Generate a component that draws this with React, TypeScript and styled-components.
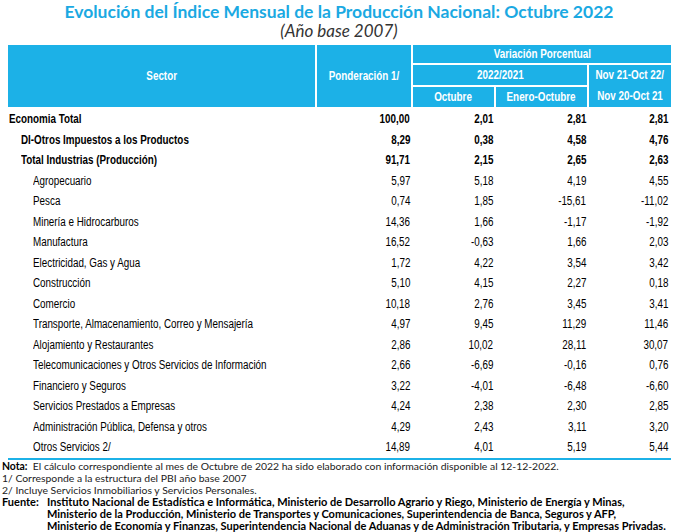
import React from "react";
import styled, { createGlobalStyle } from "styled-components";

const GlobalStyle = createGlobalStyle`
  html, body {
    margin: 0;
    padding: 0;
    background: #fff;
  }
`;

const Page = styled.div`
  width: 678px;
  height: 532px;
  overflow: hidden;
  background: #fff;
`;

const Heading = styled.div`
  padding-top: 2px;
  margin-bottom: 5px;
  text-align: center;
  font-family: Lato, "Open Sans", sans-serif;
`;

const Title = styled.h1`
  margin: 0;
  font-weight: 700;
  font-size: 17.5px;
  line-height: 20px;
  color: #1aa9e2;
`;

const Subtitle = styled.div`
  font-style: italic;
  font-size: 17px;
  line-height: 18px;
  color: #333;
`;

const Table = styled.div`
  margin: 0 7px 0 8px;
  font-family: "Liberation Sans", Arial, sans-serif;
  font-size: 12px;
`;

const cols = "307px 94px 81px 91px 82px";

const Head = styled.div`
  display: grid;
  grid-template-columns: ${cols};
  grid-template-rows: 18px 20px 20px;
  gap: 2px;
`;

const HeadCell = styled.div<{ $col: string; $row: string }>`
  grid-column: ${(p) => p.$col};
  grid-row: ${(p) => p.$row};
  background: #1cb1e7;
  color: #fff;
  font-weight: 700;
  display: flex;
  flex-direction: column;
  align-items: center;
  justify-content: center;
  line-height: 21px;
  white-space: nowrap;
`;

// Arial Narrow look: Liberation Sans squeezed horizontally
const Narrow = styled.span<{ $origin?: string }>`
  display: inline-block;
  white-space: nowrap;
  transform: scaleX(0.82);
  transform-origin: ${(p) => p.$origin ?? "center"};
`;

const Body = styled.div`
  padding-top: 2px;
  border-bottom: 2px solid #1cb1e7;
`;

const Row = styled.div<{ $bold?: boolean }>`
  display: grid;
  grid-template-columns: ${cols};
  column-gap: 2px;
  height: 20.5px;
  align-items: center;
  font-weight: ${(p) => (p.$bold ? 700 : 400)};
  color: #000;
`;

const Label = styled.div<{ $level: number }>`
  padding-left: ${(p) => 1 + p.$level * 12}px;
`;

const Num = styled.div`
  text-align: right;
  padding-right: 1px;

  &:last-child {
    padding-right: 3px;
  }
`;

const Notes = styled.div`
  padding-left: 2px;
  font-family: Lato, "Open Sans", sans-serif;
  font-size: 10.4px;
  line-height: 12px;
  color: #222;
  white-space: nowrap;
`;

const Line = styled.div``;

const B = styled.b`
  font-weight: 700;
  color: #000;
`;

const Source = styled.div`
  display: grid;
  grid-template-columns: 45px auto;
  font-weight: 700;
  font-size: 11px;
  color: #000;
`;

type R = [string, number, string, string, string, string];

const rows: R[] = [
  ["Economia Total", 0, "100,00", "2,01", "2,81", "2,81"],
  ["DI-Otros Impuestos a los Productos", 1, "8,29", "0,38", "4,58", "4,76"],
  ["Total  Industrias (Producción)", 1, "91,71", "2,15", "2,65", "2,63"],
  ["Agropecuario", 2, "5,97", "5,18", "4,19", "4,55"],
  ["Pesca", 2, "0,74", "1,85", "-15,61", "-11,02"],
  ["Minería e Hidrocarburos", 2, "14,36", "1,66", "-1,17", "-1,92"],
  ["Manufactura", 2, "16,52", "-0,63", "1,66", "2,03"],
  ["Electricidad, Gas y Agua", 2, "1,72", "4,22", "3,54", "3,42"],
  ["Construcción", 2, "5,10", "4,15", "2,27", "0,18"],
  ["Comercio", 2, "10,18", "2,76", "3,45", "3,41"],
  ["Transporte, Almacenamiento, Correo y Mensajería", 2, "4,97", "9,45", "11,29", "11,46"],
  ["Alojamiento y Restaurantes", 2, "2,86", "10,02", "28,11", "30,07"],
  ["Telecomunicaciones y Otros Servicios de Información", 2, "2,66", "-6,69", "-0,16", "0,76"],
  ["Financiero y Seguros", 2, "3,22", "-4,01", "-6,48", "-6,60"],
  ["Servicios Prestados a Empresas", 2, "4,24", "2,38", "2,30", "2,85"],
  ["Administración Pública, Defensa y otros", 2, "4,29", "2,43", "3,11", "3,20"],
  ["Otros Servicios 2/", 2, "14,89", "4,01", "5,19", "5,44"],
];

export default function App() {
  return (
    <Page>
      <GlobalStyle />
      <Heading>
        <Title>Evolución del Índice Mensual de la Producción Nacional: Octubre 2022</Title>
        <Subtitle>(Año base 2007)</Subtitle>
      </Heading>
      <Table>
        <Head>
          <HeadCell $col="1" $row="1 / 4">
            <Narrow>Sector</Narrow>
          </HeadCell>
          <HeadCell $col="2" $row="1 / 4">
            <Narrow>Ponderación 1/</Narrow>
          </HeadCell>
          <HeadCell $col="3 / 6" $row="1">
            <Narrow>Variación Porcentual</Narrow>
          </HeadCell>
          <HeadCell $col="3 / 5" $row="2">
            <Narrow>2022/2021</Narrow>
          </HeadCell>
          <HeadCell $col="5" $row="2 / 4">
            <Narrow>Nov 21-Oct 22/</Narrow>
            <Narrow>Nov 20-Oct 21</Narrow>
          </HeadCell>
          <HeadCell $col="3" $row="3">
            <Narrow>Octubre</Narrow>
          </HeadCell>
          <HeadCell $col="4" $row="3">
            <Narrow>Enero-Octubre</Narrow>
          </HeadCell>
        </Head>
        <Body>
          {rows.map(([name, level, ...nums]) => (
            <Row key={name} $bold={level < 2}>
              <Label $level={level}>
                <Narrow $origin="left">{name}</Narrow>
              </Label>
              {nums.map((n, i) => (
                <Num key={i}>
                  <Narrow $origin="right">{n}</Narrow>
                </Num>
              ))}
            </Row>
          ))}
        </Body>
      </Table>
      <Notes>
        <Line>
          <B>Nota:</B>&nbsp; El cálculo correspondiente al mes de Octubre de 2022 ha sido elaborado con información disponible al 12-12-2022.
        </Line>
        <Line>1/ Corresponde a la estructura del PBI año base 2007</Line>
        <Line>2/ Incluye Servicios Inmobiliarios y Servicios Personales.</Line>
        <Source>
          <span>Fuente:</span>
          <div>
            <Line>Instituto Nacional de Estadística e Informática, Ministerio de Desarrollo Agrario y Riego, Ministerio de Energía y Minas,</Line>
            <Line>Ministerio de la Producción, Ministerio de Transportes y Comunicaciones, Superintendencia de Banca, Seguros y AFP,</Line>
            <Line>Ministerio de Economía y Finanzas, Superintendencia Nacional de Aduanas y de Administración Tributaria, y Empresas Privadas.</Line>
          </div>
        </Source>
      </Notes>
    </Page>
  );
}
